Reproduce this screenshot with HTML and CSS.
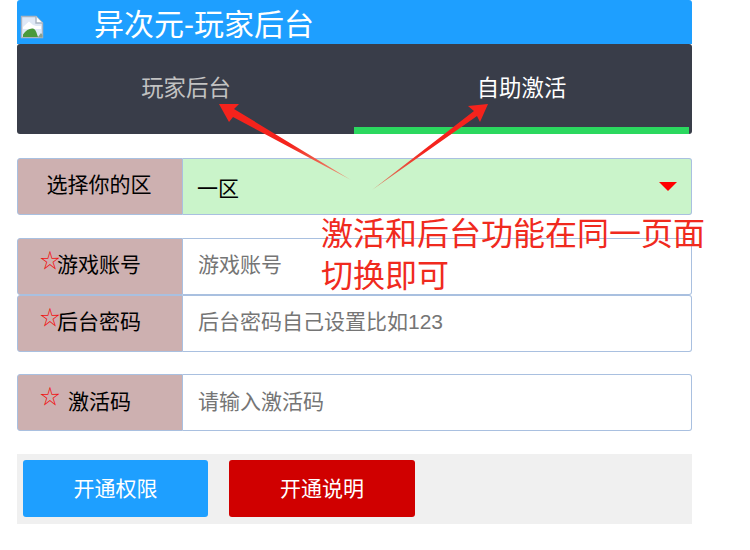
FILE: index.html
```html
<!DOCTYPE html>
<html lang="zh-CN">
<head>
<meta charset="utf-8">
<title>异次元-玩家后台</title>
<link rel="stylesheet" href="styles.css">
</head>
<body>
<main class="page">
  <header class="top">
    <svg class="broken" viewBox="0 0 24 24" aria-hidden="true">
      <path d="M1.5 1.5H16L22.5 8V22.5H1.5Z" fill="#dfe8f6" stroke="#a9b4c2" stroke-width="1.4"/>
      <path d="M16 1.5V8H22.5" fill="#fff" stroke="#a9b4c2" stroke-width="1.4"/>
      <path d="M3 12L9 6.5L13 10L16 11H21V14H3Z" fill="#fff"/>
      <path d="M3 22V19.5C6 15 11 12.5 14 14C16 15 17 19 18 22Z" fill="#4a9a3c"/>
      <path d="M18 22L21 18L22.5 20V22.5Z" fill="#88a090"/>
    </svg>
    <h1 class="title">异次元-玩家后台</h1>
  </header>
  <nav class="tabs">
    <div class="tab tab-first">玩家后台</div>
    <div class="tab tab-on">自助激活</div>
  </nav>
  <div class="row row-first">
    <div class="label label-top">选择你的区</div>
    <div class="picker"><span>一区</span><i class="caret"></i></div>
  </div>
  <div class="row row-gap">
    <label class="label label-star"><span class="star">☆</span>游戏账号</label>
    <input class="field" placeholder="游戏账号">
  </div>
  <div class="row">
    <label class="label label-star"><span class="star">☆</span>后台密码</label>
    <input class="field" placeholder="后台密码自己设置比如123">
  </div>
  <div class="row row-gap-b">
    <label class="label label-star"><span class="star star-sp">☆</span>激活码</label>
    <input class="field" placeholder="请输入激活码">
  </div>
  <div class="actions">
    <button class="btn btn-blue">开通权限</button>
    <button class="btn btn-red">开通说明</button>
  </div>
</main>
<svg class="arrows" viewBox="0 0 750 550" aria-hidden="true">
  <defs>
    <linearGradient id="a1" gradientUnits="userSpaceOnUse" x1="350" y1="180" x2="290" y2="143">
      <stop offset="0" stop-color="#e8a080"/><stop offset="1" stop-color="#f5231c"/>
    </linearGradient>
    <linearGradient id="a2" gradientUnits="userSpaceOnUse" x1="373" y1="190" x2="425" y2="150">
      <stop offset="0" stop-color="#d89070"/><stop offset="1" stop-color="#f5231c"/>
    </linearGradient>
  </defs>
  <path d="M219 104L239 104L234 109L351 180L233 117L229 122Z" fill="url(#a1)"/>
  <path d="M488 104L468 106L474 111L372 190L477 116L480 122Z" fill="url(#a2)"/>
</svg>
<p class="note">激活和后台功能在同一页面<br>切换即可</p>
</body>
</html>
```
FILE: styles.css
```css
* { box-sizing: border-box; }
html, body { margin: 0; padding: 0; }
body {
  width: 750px;
  height: 550px;
  overflow: hidden;
  background: #fff;
  color: #000;
  font-family: "Liberation Sans", "Noto Sans CJK SC", sans-serif;
  font-size: 21px;
  position: relative;
}
.page {
  width: 675px;
  margin-left: 17px;
  display: flex;
  flex-direction: column;
}
.top {
  height: 44px;
  background: #1e9fff;
  border-radius: 3px 3px 0 0;
  display: flex;
  align-items: center;
  padding-left: 3px;
}
.broken { width: 24px; height: 24px; margin-top: 9px; flex: none; }
.title {
  margin: 5px 0 0 50px;
  font-size: 30px;
  font-weight: 400;
  line-height: 44px;
  color: #fff;
}
.tabs {
  height: 90px;
  background: #393d49;
  border-radius: 3px;
  display: flex;
  padding-right: 3px;
}
.tab {
  height: 90px;
  padding: 3px 0 3px;
  display: flex;
  align-items: center;
  justify-content: center;
  font-size: 22.4px;
  color: #c2c2c2;
  border-bottom: 7px solid transparent;
}
.tab-first { width: 338px; }
.tab-on { width: 335px; margin-left: -1px; color: #fff; border-bottom-color: #2bd85f; }
.row { display: flex; height: 57px; }
.row-first { margin-top: 24px; }
.row-gap { margin-top: 23px; }
.row-gap-b { margin-top: 22px; }
.label {
  width: 166px;
  flex: none;
  background: #cdb0b0;
  border: 1px solid #a9c0e0;
  border-radius: 3px 0 0 3px;
  display: flex;
  align-items: center;
  justify-content: center;
  line-height: 1;
}
.label-top { padding: 0 2px 4px 0; }
.label-star { justify-content: flex-start; padding: 0 0 4px 22px; }
.star { color: #f01010; font-size: 20px; margin: -8px -3px 0 0; line-height: 1; }
.star-sp { margin-right: 8px; }
.picker, .field {
  flex: 1;
  min-width: 0;
  border: 1px solid #a9c0e0;
  border-left: 0;
  border-radius: 0 3px 3px 0;
  padding: 0 22px 0 15px;
  font: inherit;
  outline: 0;
}
.picker {
  background: #caf4ca;
  display: flex;
  align-items: center;
  justify-content: space-between;
  padding-left: 14px;
}
.field { background: #fff; color: #000; padding-bottom: 4px; }
.row-gap-b .field, .row-gap-b .label { padding-bottom: 2px; }
.row-gap-b .star { margin-top: -10px; }
.field::placeholder { color: #757575; opacity: 1; }
.caret {
  width: 0;
  height: 0;
  border-left: 9px solid transparent;
  border-right: 9px solid transparent;
  border-top: 9px solid #f00;
  margin-right: -8px;
}
.actions {
  margin-top: 23px;
  height: 70px;
  background: #f0f0f0;
  display: flex;
  align-items: flex-start;
  gap: 21px;
  padding: 6px 0 0 6px;
}
.btn {
  width: 185px;
  height: 57px;
  border: 0;
  border-radius: 3px;
  color: #fff;
  font: inherit;
  padding: 0 0 3px;
}
.btn-blue { background: #1e9fff; }
.btn-red { background: #d00000; width: 186px; }
.arrows { position: absolute; left: 0; top: 0; width: 750px; height: 550px; pointer-events: none; }
.note {
  position: absolute;
  left: 321px;
  top: 213px;
  margin: 0;
  font-size: 32px;
  line-height: 42px;
  color: #f02a1e;
  white-space: nowrap;
}
```
